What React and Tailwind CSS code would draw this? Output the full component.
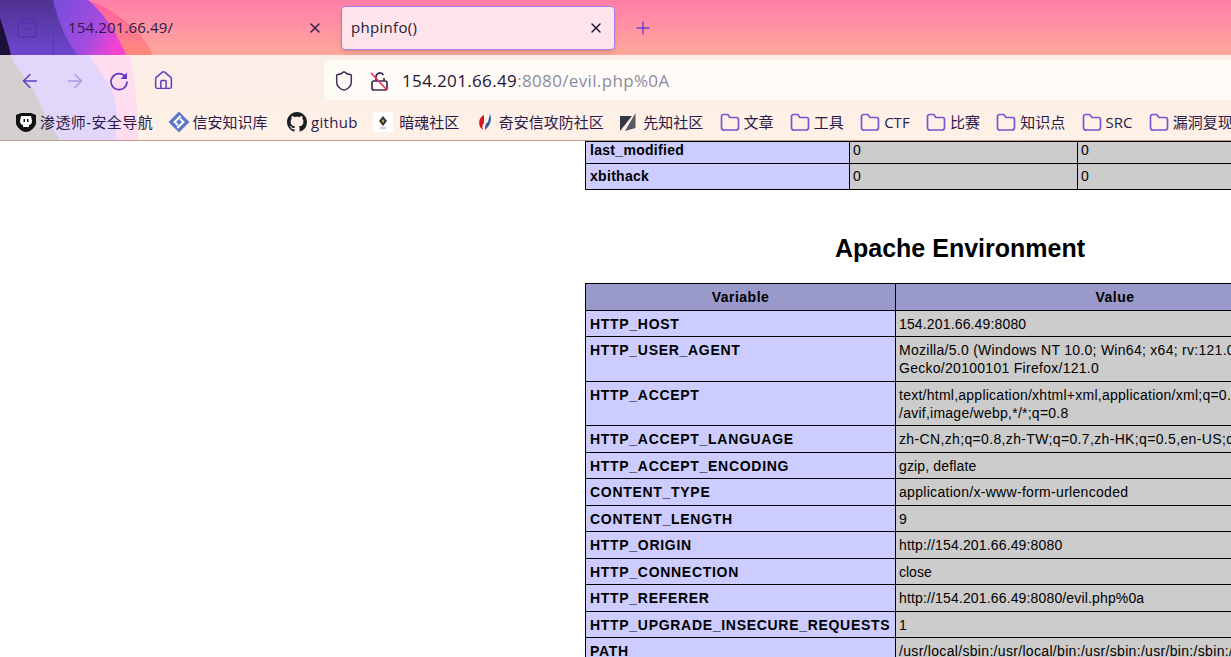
import React from "react"
import { ArrowLeft, ArrowRight, Home, Shield, X, Plus } from "lucide-react"

const firstRows = [
  { name: "last_modified", local: "0", master: "0", rowClass: "h-[22px]", cellClass: "pb-[5px]" },
  { name: "xbithack", local: "0", master: "0", rowClass: "h-[26px]", cellClass: "pb-[2px]" },
]

// the reference is GDI hinted, so each value line needs its own spacing to get the same width
const envRows = [
  { name: "HTTP_HOST", lines: ["154.201.66.49:8080"], track: "tracking-[0.15px]" },
  {
    name: "HTTP_USER_AGENT",
    lines: ["Mozilla/5.0 (Windows NT 10.0; Win64; x64; rv:121.0)", "Gecko/20100101 Firefox/121.0"],
    track: "tracking-[0.28px]",
  },
  {
    name: "HTTP_ACCEPT",
    lines: ["text/html,application/xhtml+xml,application/xml;q=0.9,image", "/avif,image/webp,*/*;q=0.8"],
    track: "tracking-[0.25px]",
  },
  { name: "HTTP_ACCEPT_LANGUAGE", lines: ["zh-CN,zh;q=0.8,zh-TW;q=0.7,zh-HK;q=0.5,en-US;q=0.3,en;q=0.2"], track: "tracking-[0.35px]" },
  { name: "HTTP_ACCEPT_ENCODING", lines: ["gzip, deflate"], track: "tracking-[0.15px]" },
  { name: "CONTENT_TYPE", lines: ["application/x-www-form-urlencoded"], track: "tracking-[0.3px]" },
  { name: "CONTENT_LENGTH", lines: ["9"], track: "" },
  { name: "HTTP_ORIGIN", lines: ["http://154.201.66.49:8080"], track: "tracking-[0.15px]" },
  { name: "HTTP_CONNECTION", lines: ["close"], track: "" },
  { name: "HTTP_REFERER", lines: ["http://154.201.66.49:8080/evil.php%0a"], track: "tracking-[0.15px]" },
  { name: "HTTP_UPGRADE_INSECURE_REQUESTS", lines: ["1"], track: "" },
  { name: "PATH", lines: ["/usr/local/sbin:/usr/local/bin:/usr/sbin:/usr/bin:/sbin:/bin"], track: "tracking-[0.32px]" },
]

const uiFont = "font-['Open_Sans','Noto_Sans_CJK_SC',sans-serif]"

const ChromeBackdrop = () => (
  <svg className="absolute inset-0 w-full h-full" viewBox="0 0 1231 141" preserveAspectRatio="none">
    <defs>
      <linearGradient id="top" x1="0" y1="0" x2="0" y2="1">
        <stop offset="0" stopColor="#ff7ea9" />
        <stop offset="1" stopColor="#ffa89b" />
      </linearGradient>
      <linearGradient id="hot" x1="0" y1="0" x2="0" y2="1">
        <stop offset="0" stopColor="#ff5ea6" />
        <stop offset="1" stopColor="#ff8a7c" />
      </linearGradient>
      <linearGradient id="magenta" gradientUnits="userSpaceOnUse" x1="60" y1="0" x2="125" y2="30">
        <stop offset="0" stopColor="#7b4ddb" />
        <stop offset="0.6" stopColor="#a44be0" />
        <stop offset="1" stopColor="#f843d2" />
      </linearGradient>
      <linearGradient id="deep" x1="0" y1="0" x2="0" y2="1">
        <stop offset="0" stopColor="#4f3290" />
        <stop offset="1" stopColor="#6d47d0" />
      </linearGradient>
      <linearGradient id="peach" x1="0" y1="0" x2="0" y2="1">
        <stop offset="0" stopColor="#fbeee8" />
        <stop offset="1" stopColor="#fff1e6" />
      </linearGradient>
    </defs>
    <rect width="1231" height="55" fill="url(#top)" />
    <path d="M88 0 C120 12 145 35 153 55 L0 55 L0 0 Z" fill="url(#hot)" />
    <path d="M88 0 C105 14 118 35 126 55 L0 55 L0 0 Z" fill="url(#magenta)" />
    <path d="M0 0 L53 0 C58 20 66 42 78 55 L0 55 Z" fill="url(#deep)" />
    <path d="M0 18 C4 30 8 42 11 55 L0 55 Z" fill="#1e1038" />
    <rect y="55" width="1231" height="85" fill="url(#peach)" />
    <path d="M0 55 L130 55 C136 85 138 115 138 140 L0 140 Z" fill="#ffdcee" />
    <path d="M0 55 L90 55 C100 75 113 85 116 105 C118 120 116 130 115 140 L0 140 Z" fill="#e2d6fa" />
    <path d="M0 55 L10 55 C20 75 30 82 36 95 C44 112 50 125 60 140 L0 140 Z" fill="#d4d0d1" />
    <rect y="140" width="1231" height="1" fill="#c09a90" />
  </svg>
)

const FolderIcon = () => (
  <svg width="20" height="20" viewBox="0 0 20 20" fill="none" stroke="#7a55d3" strokeWidth="1.7" strokeLinejoin="round">
    <path d="M1.5 4.5A2 2 0 0 1 3.5 2.5h4.2l2.3 3h6.5a2 2 0 0 1 2 2v8a2.5 2.5 0 0 1-2.5 2.5h-11A2.5 2.5 0 0 1 1.5 15.5z" />
  </svg>
)

const Bookmark = ({ icon, label, className = "", labelClass = "" }) => (
  <div className={`flex items-center gap-[4px] shrink-0 ${className}`}>
    <span className="w-5 h-5 flex items-center justify-center shrink-0 [&>svg]:shrink-0">{icon}</span>
    <span className={`text-[15px] leading-5 text-[#2a1a4a] whitespace-nowrap ${uiFont} ${labelClass}`}>{label}</span>
  </div>
)

export default function App() {
  return (
    <div className="h-screen overflow-hidden bg-white flex flex-col font-['Liberation_Sans',sans-serif]">
      {/* Browser chrome */}
      <header className="relative h-[141px] shrink-0 overflow-hidden">
        <ChromeBackdrop />

        <div className="relative h-[55px] flex items-center">
          <div className="w-[54px] h-full flex items-center justify-center border-r border-[#5b3aa8]">
            <svg width="20" height="20" viewBox="0 0 20 20" fill="none" stroke="#5234b0" strokeWidth="1.5">
              <rect x="1" y="5" width="18" height="14" rx="2" />
              <path d="M4 1.5h12M7 11h6" />
            </svg>
          </div>
          <div className="w-[287px] h-[44px] flex items-center pl-[14px] pr-[18px]">
            <span className={`flex-1 text-[15px] tracking-[0.15px] text-[#2a1a4a] ${uiFont}`}>154.201.66.49/</span>
            <X size={16} className="text-[#2a1a4a]" />
          </div>
          <div className="w-[274px] h-[44px] flex items-center pl-[9px] pr-[10px] rounded bg-[#ffe4ec] border border-[#a67de8] shadow-md">
            <span className={`flex-1 text-[15px] tracking-[0.3px] text-[#1e1533] ${uiFont}`}>phpinfo()</span>
            <X size={16} className="text-[#1e1533]" />
          </div>
          <Plus size={20} strokeWidth={1.6} className="ml-[18px] text-[#6a3fd0]" />
        </div>

        <div className="relative h-[45px] flex items-center pt-[5px]">
          <div className="flex items-center gap-[23px] pl-[19px] pt-[1px] w-[324px] text-[#5f3dc4]">
            <ArrowLeft size={22} strokeWidth={1.6} />
            <ArrowRight size={22} strokeWidth={1.6} className="opacity-40" />
            <svg width="22" height="22" viewBox="0 0 22 22" fill="none" stroke="currentColor" strokeWidth="1.7" className="-ml-[1px]">
              <path d="M17.5 7A8 8 0 1 0 19 11.5" />
              <path d="M19 2.5V9h-6.5z" fill="currentColor" stroke="none" />
            </svg>
            <Home size={21} strokeWidth={1.7} />
          </div>
          <div className="flex-1 h-10 bg-[#fffcf8] rounded-l-lg flex items-center pl-[9px] pt-[1px]">
            <Shield size={22} strokeWidth={1.6} className="text-[#3a2f55]" />
            <svg className="ml-[14px]" width="20" height="20" viewBox="0 0 20 20" fill="none" stroke="#3a2f55" strokeWidth="1.7">
              <path d="M5 10h11a2 2 0 0 1 2 2v5a2 2 0 0 1-2 2H5a2 2 0 0 1-2-2v-5a2 2 0 0 1 2-2z" />
              <path d="M7 10V6a4 4 0 0 1 7.5-2M15 7v3" />
              <path d="M2 2l16 17" stroke="#f0305e" />
            </svg>
            <span className={`ml-[13px] text-[17px] tracking-[0.35px] ${uiFont} text-[#1c1430]`}>
              154.201.66.49<span className="text-[#8d8aa0]">:8080/evil.php%0A</span>
            </span>
          </div>
        </div>

        <div className="relative h-[40px] flex items-center pl-[16px] pt-[4px] gap-[15.5px] overflow-hidden">
          <Bookmark
            label="渗透师-安全导航"
            labelClass="tracking-[0.4px]"
            icon={
              <svg width="20" height="20" viewBox="0 0 20 20">
                <path d="M0 3l5-2h10l5 2v8c0 4-6 9-10 9S0 15 0 11z" fill="#111" />
                <path d="M5 4h10l1 5c0 3-2 4-3 4v2H7v-2c-1 0-3-1-3-4z" fill="#fff" />
                <path d="M7.5 7h1.5v3H7.5zM11 7h1.5v3H11z" fill="#111" />
              </svg>
            }
          />
          <Bookmark
            label="信安知识库"
            icon={
              <svg width="22" height="22" viewBox="0 0 20 20">
                <path d="M10 .5L19.5 10 10 19.5.5 10z" fill="#5e76c9" />
                <path d="M11.5 4.5L6 10l3 3M8.5 15.5L14 10l-3-3" stroke="#fff" strokeWidth="1.9" fill="none" />
              </svg>
            }
          />
          <Bookmark
            className="ml-[4px]"
            label="github"
            labelClass="tracking-[0.3px]"
            icon={
              <svg width="20" height="20" viewBox="0 0 16 16" fill="#1b1f23">
                <path d="M8 0C3.58 0 0 3.58 0 8c0 3.54 2.29 6.53 5.47 7.59.4.07.55-.17.55-.38 0-.19-.01-.82-.01-1.49-2.01.37-2.53-.49-2.69-.94-.09-.23-.48-.94-.82-1.13-.28-.15-.68-.52-.01-.53.63-.01 1.08.58 1.23.82.72 1.21 1.87.87 2.33.66.07-.52.28-.87.51-1.07-1.78-.2-3.64-.89-3.64-3.95 0-.87.31-1.59.82-2.15-.08-.2-.36-1.02.08-2.12 0 0 .67-.21 2.2.82.64-.18 1.32-.27 2-.27s1.36.09 2 .27c1.53-1.04 2.2-.82 2.2-.82.44 1.1.16 1.92.08 2.12.51.56.82 1.27.82 2.15 0 3.07-1.87 3.75-3.65 3.95.29.25.54.73.54 1.48 0 1.07-.01 1.93-.01 2.2 0 .21.15.46.55.38A8.01 8.01 0 0 0 16 8c0-4.42-3.58-8-8-8z" />
              </svg>
            }
          />
          <Bookmark
            className="gap-[6px]"
            label="暗魂社区"
            icon={
              <svg width="20" height="20" viewBox="0 0 20 20">
                <rect width="20" height="20" fill="#fff" />
                <path d="M10 4l4 5-4 5-4-5z" fill="#333" />
                <path d="M10 7l1.5 2-1.5 2-1.5-2z" fill="#c8a060" />
                <path d="M7 16h6" stroke="#999" />
              </svg>
            }
          />
          <Bookmark
            label="奇安信攻防社区"
            icon={
              <svg width="20" height="20" viewBox="0 0 20 20">
                <path d="M9 3C5 5 3 9 5 15l3 3c-1-3-1-5 1-7z" fill="#d8141c" />
                <path d="M15 2c2 5 1 11-5 16 0-3 0-6 3-8z" fill="#2a5ca8" />
              </svg>
            }
          />
          <Bookmark
            label="先知社区"
            icon={
              <svg width="20" height="20" viewBox="0 0 20 20">
                <path d="M1 4h12L1 19z" fill="#333a44" />
                <path d="M16.5 1v15L6 19z" fill="#555c66" />
              </svg>
            }
          />
          {["文章", "工具", "CTF", "比赛", "知识点", "SRC", "漏洞复现"].map((name) => (
            <Bookmark key={name} className="ml-[0.8px]" label={name} icon={<FolderIcon />} />
          ))}
        </div>
      </header>

      {/* phpinfo page, scrolled */}
      <main className="flex-1 min-h-0 overflow-hidden pl-[585px] text-[14px] text-black">
        <div className="w-[750px]">
          <table className="w-full table-fixed border-collapse leading-4">
            <colgroup>
              <col className="w-[264px]" />
              <col className="w-[228px]" />
              <col />
            </colgroup>
            <tbody>
              {firstRows.map((row) => (
                <tr key={row.name} className={row.rowClass}>
                  <td className={`border border-black bg-[#ccf] px-1 font-bold tracking-[0.3px] ${row.cellClass}`}>{row.name}</td>
                  <td className={`border border-black bg-[#ccc] pl-[3px] pr-1 ${row.cellClass}`}>{row.local}</td>
                  <td className={`border border-black bg-[#ccc] pl-[3px] pr-1 ${row.cellClass}`}>{row.master}</td>
                </tr>
              ))}
            </tbody>
          </table>

          <h2 className="mt-[43px] mb-[20px] text-center text-[25px] leading-[30px] font-bold">Apache Environment</h2>

          <table className="w-full table-fixed border-collapse leading-[18px]">
            <colgroup>
              <col className="w-[310px]" />
              <col />
            </colgroup>
            <thead>
              <tr className="h-[26.5px] bg-[#99c]">
                <th className="border border-black px-1 font-bold tracking-[0.5px]">Variable</th>
                <th className="border border-black px-1 font-bold tracking-[0.5px]">Value</th>
              </tr>
            </thead>
            <tbody>
              {envRows.map((row) => (
                <tr key={row.name} className={row.lines.length > 1 ? "h-[44.5px]" : "h-[26.5px]"}>
                  <td className="border border-black bg-[#ccf] pl-1 pr-0 font-bold align-top pt-[4px] tracking-[0.7px] whitespace-nowrap">{row.name}</td>
                  <td className={`border border-black bg-[#ccc] pl-[3px] pr-1 align-top pt-[4px] whitespace-nowrap ${row.track}`}>
                    {row.lines.map((line) => (
                      <div key={line}>{line}</div>
                    ))}
                  </td>
                </tr>
              ))}
            </tbody>
          </table>
        </div>
      </main>
    </div>
  )
}
